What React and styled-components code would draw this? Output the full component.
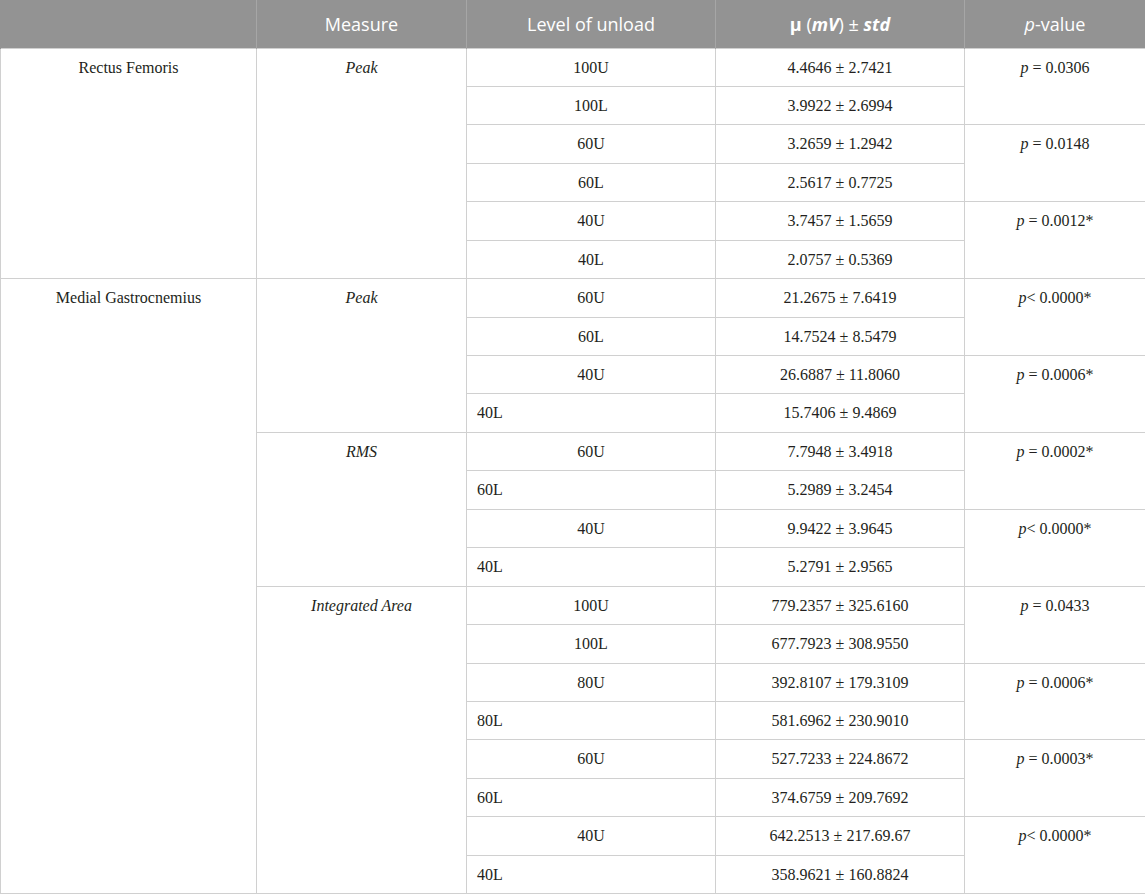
import React from "react";
import styled, { createGlobalStyle } from "styled-components";

const GlobalStyle = createGlobalStyle`
  body {
    margin: 0;
    background: #ffffff;
  }
`;

const Table = styled.table`
  width: 1145px;
  border-collapse: collapse;
  table-layout: fixed;
  font-family: "Liberation Serif", "Times New Roman", serif;
  font-size: 16px;
  color: #231f20;
`;

const HeadRow = styled.tr`
  height: 48px;
  background: #939393;
`;

const HeadCell = styled.th`
  font-family: "Open Sans", "Noto Sans", sans-serif;
  font-weight: 400;
  font-size: 18px;
  color: #ffffff;
  text-align: center;
  vertical-align: middle;
  padding: 0 8px;
  border-left: 1px solid #a6a6a6;
  border-right: 1px solid #a6a6a6;
  &:first-child {
    border-left: 1px solid #939393;
  }
`;

const BodyRow = styled.tr`
  height: 38.45px;
`;

const Cell = styled.td`
  border: 1px solid #d0d0d0;
  vertical-align: top;
  line-height: 37px;
  padding: 0 10px;
  text-align: ${({ $left }) => ($left ? "left" : "center")};
  white-space: nowrap;
`;

const Em = styled.i`
  font-style: italic;
`;

const BoldEm = styled.b`
  font-weight: 700;
  font-style: ${({ $upright }) => ($upright ? "normal" : "italic")};
`;

// muscle groups, each measure lists pairs of levels with one p-value per pair
const data = [
  {
    muscle: "Rectus Femoris",
    measures: [
      {
        name: "Peak",
        pairs: [
          { p: "p = 0.0306", rows: [["100U", "4.4646 ± 2.7421"], ["100L", "3.9922 ± 2.6994"]] },
          { p: "p = 0.0148", rows: [["60U", "3.2659 ± 1.2942"], ["60L", "2.5617 ± 0.7725"]] },
          { p: "p = 0.0012*", rows: [["40U", "3.7457 ± 1.5659"], ["40L", "2.0757 ± 0.5369"]] },
        ],
      },
    ],
  },
  {
    muscle: "Medial Gastrocnemius",
    measures: [
      {
        name: "Peak",
        pairs: [
          { p: "p< 0.0000*", rows: [["60U", "21.2675 ± 7.6419"], ["60L", "14.7524 ± 8.5479"]] },
          { p: "p = 0.0006*", rows: [["40U", "26.6887 ± 11.8060"], ["40L", "15.7406 ± 9.4869", true]] },
        ],
      },
      {
        name: "RMS",
        pairs: [
          { p: "p = 0.0002*", rows: [["60U", "7.7948 ± 3.4918"], ["60L", "5.2989 ± 3.2454", true]] },
          { p: "p< 0.0000*", rows: [["40U", "9.9422 ± 3.9645"], ["40L", "5.2791 ± 2.9565", true]] },
        ],
      },
      {
        name: "Integrated Area",
        pairs: [
          { p: "p = 0.0433", rows: [["100U", "779.2357 ± 325.6160"], ["100L", "677.7923 ± 308.9550"]] },
          { p: "p = 0.0006*", rows: [["80U", "392.8107 ± 179.3109"], ["80L", "581.6962 ± 230.9010", true]] },
          { p: "p = 0.0003*", rows: [["60U", "527.7233 ± 224.8672"], ["60L", "374.6759 ± 209.7692", true]] },
          { p: "p< 0.0000*", rows: [["40U", "642.2513 ± 217.69.67"], ["40L", "358.9621 ± 160.8824", true]] },
        ],
      },
    ],
  },
];

const PValue = ({ text }) => (
  <>
    <Em>p</Em>
    {text.slice(1)}
  </>
);

const App = () => {
  const rows = [];
  data.forEach((group) => {
    const groupSpan = group.measures.reduce((n, m) => n + m.pairs.length * 2, 0);
    group.measures.forEach((measure, mi) => {
      const measureSpan = measure.pairs.length * 2;
      measure.pairs.forEach((pair, pi) => {
        pair.rows.forEach(([level, value, left], ri) => {
          const first = pi === 0 && ri === 0;
          rows.push(
            <BodyRow key={`${group.muscle}-${measure.name}-${level}`}>
              {mi === 0 && first && <Cell rowSpan={groupSpan}>{group.muscle}</Cell>}
              {first && (
                <Cell rowSpan={measureSpan}>
                  <Em>{measure.name}</Em>
                </Cell>
              )}
              <Cell $left={left}>{level}</Cell>
              <Cell>{value}</Cell>
              {ri === 0 && (
                <Cell rowSpan={2}>
                  <PValue text={pair.p} />
                </Cell>
              )}
            </BodyRow>
          );
        });
      });
    });
  });

  return (
    <>
      <GlobalStyle />
      <Table>
        <colgroup>
          <col style={{ width: 256 }} />
          <col style={{ width: 210 }} />
          <col style={{ width: 249 }} />
          <col style={{ width: 249 }} />
          <col style={{ width: 181 }} />
        </colgroup>
        <thead>
          <HeadRow>
            <HeadCell />
            <HeadCell>Measure</HeadCell>
            <HeadCell>Level of unload</HeadCell>
            <HeadCell>
              <BoldEm $upright>μ</BoldEm> (<BoldEm>mV</BoldEm>) ± <BoldEm>std</BoldEm>
            </HeadCell>
            <HeadCell>
              <Em>p</Em>-value
            </HeadCell>
          </HeadRow>
        </thead>
        <tbody>{rows}</tbody>
      </Table>
    </>
  );
};

export default App;
